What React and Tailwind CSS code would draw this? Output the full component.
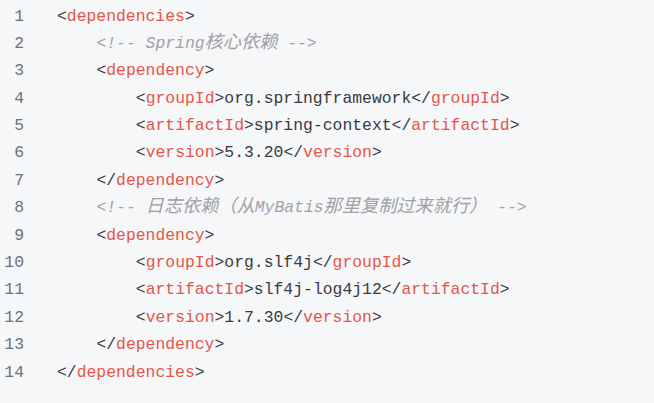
import React from "react";

const T = ({ children }) => <span className="text-[#e45649]">{children}</span>;
const P = ({ children }) => <span className="text-[#383a42]">{children}</span>;
const C = ({ children }) => <span className="italic text-[#a0a1a7]">{children}</span>;
const K = ({ children }) => <span className="text-[18.2px]">{children}</span>;

const open = (name) => (<><P>&lt;</P><T>{name}</T><P>&gt;</P></>);
const close = (name) => (<><P>&lt;/</P><T>{name}</T><P>&gt;</P></>);

const lines = [
  [0, open("dependencies")],
  [1, <C>&lt;!-- Spring<K>核心依赖</K> --&gt;</C>],
  [1, open("dependency")],
  [2, <>{open("groupId")}<P>org.springframework</P>{close("groupId")}</>],
  [2, <>{open("artifactId")}<P>spring-context</P>{close("artifactId")}</>],
  [2, <>{open("version")}<P>5.3.20</P>{close("version")}</>],
  [1, close("dependency")],
  [1, <C>&lt;!-- <K>日志依赖（从</K>MyBatis<K>那里复制过来就行）</K> --&gt;</C>],
  [1, open("dependency")],
  [2, <>{open("groupId")}<P>org.slf4j</P>{close("groupId")}</>],
  [2, <>{open("artifactId")}<P>slf4j-log4j12</P>{close("artifactId")}</>],
  [2, <>{open("version")}<P>1.7.30</P>{close("version")}</>],
  [1, close("dependency")],
  [0, close("dependencies")],
];

const indent = ["pl-0", "pl-[39.4px]", "pl-[78.8px]"];

export default function App() {
  return (
    <div className="w-[654px] h-[403px] bg-[#f6f7f9] overflow-hidden font-['Liberation_Mono','Noto_Sans_CJK_SC',monospace] text-[16.4px] leading-[27.4px] pt-[2.5px]">
      {lines.map(([lvl, content], i) => (
        <div key={i} className="flex whitespace-pre h-[27.4px]">
          <div className="w-[24px] text-right text-[#6e7179]">{i + 1}</div>
          <div className={`ml-[33px] ${indent[lvl]}`}>{content}</div>
        </div>
      ))}
    </div>
  );
}
